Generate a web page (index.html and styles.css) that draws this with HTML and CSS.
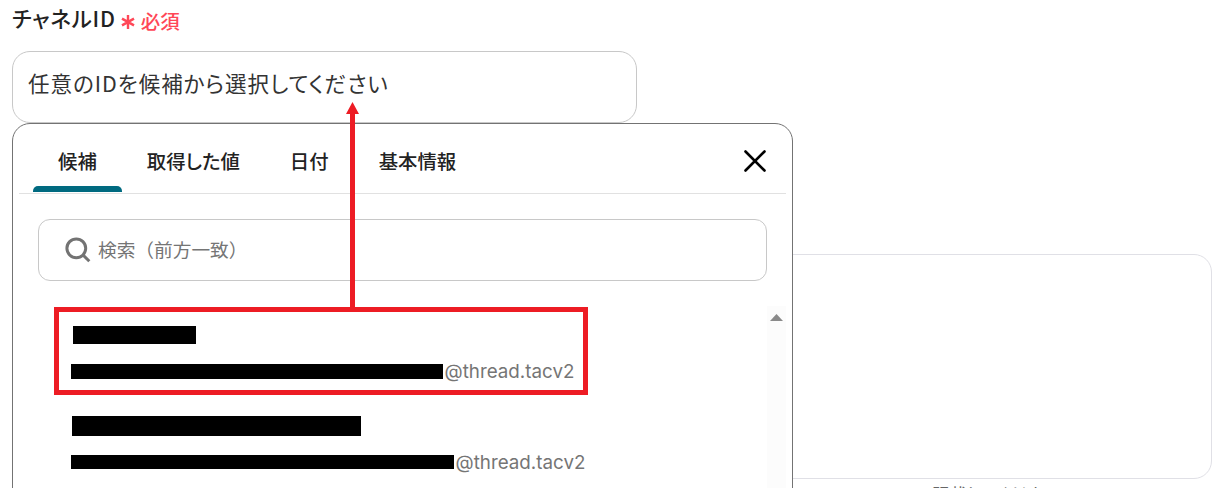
FILE: index.html
```html
<!DOCTYPE html>
<html lang="ja">
<head>
  <meta charset="UTF-8">
  <meta name="viewport" content="width=device-width, initial-scale=1.0">
  <title>チャネルID</title>
  <link rel="stylesheet" href="styles.css">
</head>
<body>
  <div class="form">
    <div class="field-label">
      <span class="label-text">チャネルID</span>
      <svg class="required-icon" width="14" height="16" viewBox="0 0 14 16"><path d="M7 1v14M1 4.6l12 6.8M13 4.6L1 11.4"/></svg>
      <span class="required-text">必須</span>
    </div>

    <div class="field">
      <div class="field-input">任意のIDを候補から選択してください</div>

      <div class="dropdown">
        <div class="dropdown-header">
          <div class="tabs">
            <div class="tab active">候補</div>
            <div class="tab">取得した値</div>
            <div class="tab">日付</div>
            <div class="tab">基本情報</div>
          </div>
          <svg class="close-icon" width="24" height="24" viewBox="0 0 24 24"><path d="M2.5 2.5l19 19M21.5 2.5l-19 19"/></svg>
        </div>

        <div class="search">
          <svg class="search-icon" width="26" height="26" viewBox="0 0 26 26"><circle cx="11.3" cy="11.3" r="9.4"/><path d="M18 18l6.3 6.3"/></svg>
          <span class="search-placeholder">検索（前方一致）</span>
        </div>

        <div class="results">
          <div class="result-list">
            <div class="result">
              <div class="mask mask-name1"></div>
              <div class="result-id"><span class="mask mask-id1"></span>@thread.tacv2</div>
            </div>
            <div class="result">
              <div class="mask mask-name2"></div>
              <div class="result-id"><span class="mask mask-id2"></span>@thread.tacv2</div>
            </div>
          </div>
          <div class="scrollbar">
            <svg width="13" height="7" viewBox="0 0 13 7"><path d="M6.5 0L13 7H0z"/></svg>
          </div>
        </div>
      </div>
    </div>

    <div class="textarea"></div>
    <div class="help-text">記載してください</div>
  </div>

  <!-- Annotation -->
  <div class="highlight"></div>
  <svg class="arrow" width="13" height="206" viewBox="0 0 13 206"><path d="M6.5 0l6.5 12H9v194H4V12H0z"/></svg>
</body>
</html>
```
FILE: styles.css
```css
* {
  box-sizing: border-box;
}

body {
  margin: 0;
  height: 488px;
  overflow: hidden;
  position: relative;
  background-color: #fff;
  color: #222;
  font-family: "Noto Sans CJK JP", sans-serif;
}

.form {
  height: 488px;
  overflow: hidden;
  padding: 5px 6px 0 12px;
}

/* Label */
.field-label {
  display: flex;
  align-items: center;
  height: 30px;
}

.label-text {
  margin-top: -6px;
  font-size: 21.4px;
  font-weight: 500;
  letter-spacing: 0.8px;
  font-feature-settings: "palt";
}

.required-icon {
  margin: 4px 6px 0 5px;
  fill: none;
  stroke: #ff4757;
  stroke-width: 2.4;
}

.required-text {
  font-size: 19.5px;
  font-weight: 500;
  color: #ff4757;
}

/* Input */
.field {
  position: relative;
  margin-top: 16px;
}

.field-input {
  display: flex;
  align-items: center;
  width: 625px;
  height: 72px;
  padding: 0 15px 9px;
  border: 1px solid #c8c8c8;
  border-radius: 18px;
  color: #333;
  font-size: 21.5px;
  letter-spacing: 1px;
  font-feature-settings: "palt";
}

/* Dropdown */
.dropdown {
  position: absolute;
  top: 72px;
  left: 0;
  width: 781px;
  height: 400px;
  padding: 0 6px;
  background-color: #fff;
  border: 1px solid #737373;
  border-radius: 18px;
}

.dropdown-header {
  display: flex;
  justify-content: space-between;
  height: 70px;
  padding: 0 19px 0 14px;
  border-bottom: 1px solid #e1e1e1;
}

.tabs {
  display: flex;
}

.tab {
  position: relative;
  padding: 23px 25px 0;
  font-size: 19.4px;
  line-height: 28px;
  font-weight: 500;
  font-feature-settings: "palt";
}

.tab.active::after {
  content: '';
  position: absolute;
  left: 0;
  right: 0;
  bottom: 1px;
  height: 6px;
  background-color: #006a80;
  border-radius: 5px 5px 0 0;
}

.close-icon {
  margin-top: 25px;
  fill: none;
  stroke: #000;
  stroke-width: 2.6;
  stroke-linecap: round;
}

.search {
  display: flex;
  align-items: center;
  height: 62px;
  margin: 25px 19px 0;
  padding: 0 26px;
  border: 1px solid #c8c8c8;
  border-radius: 12px;
}

.search-icon {
  fill: none;
  stroke: #737373;
  stroke-width: 3;
  margin-right: 7px;
}

.search-placeholder {
  margin-top: -3px;
  font-size: 18.7px;
  color: #757575;
}

/* Results */
.results {
  display: flex;
  justify-content: space-between;
  height: 200px;
  margin-top: 25px;
}

.result-list {
  padding: 20px 0 0 52px;
}

.result {
  height: 91px;
}

.mask {
  background-color: #000;
}

.mask-name1 {
  width: 123px;
  height: 18px;
  margin-left: 2px;
}

.mask-name2 {
  width: 289px;
  height: 20px;
  margin: -1px 0 -1px 1px;
}

.mask-id1 {
  width: 372px;
  height: 15px;
  margin-right: 1.5px;
}

.mask-id2 {
  width: 383px;
  height: 14px;
  margin-right: 1.5px;
}

.result-id {
  display: flex;
  align-items: center;
  height: 24px;
  margin-top: 15px;
  color: #757575;
  font-family: Inter, sans-serif;
  font-size: 18.8px;
}

.scrollbar {
  width: 19px;
  padding: 8px 3px;
  background-color: #fcfcfc;
}

.scrollbar svg {
  display: block;
  fill: #8a8a8a;
}

/* Message field below */
.textarea {
  height: 225px;
  margin-top: 131px;
  border: 1px solid #e0e0e6;
  border-radius: 18px;
}

.help-text {
  margin-top: 2px;
  padding-left: 920px;
  font-size: 17.5px;
  line-height: 26px;
  color: #666;
  font-feature-settings: "palt";
}

/* Annotation */
.highlight {
  position: absolute;
  top: 307px;
  left: 54px;
  width: 534px;
  height: 88px;
  border: 5px solid #ed1c24;
}

.arrow {
  position: absolute;
  top: 102px;
  left: 346px;
  fill: #ed1c24;
}
```
